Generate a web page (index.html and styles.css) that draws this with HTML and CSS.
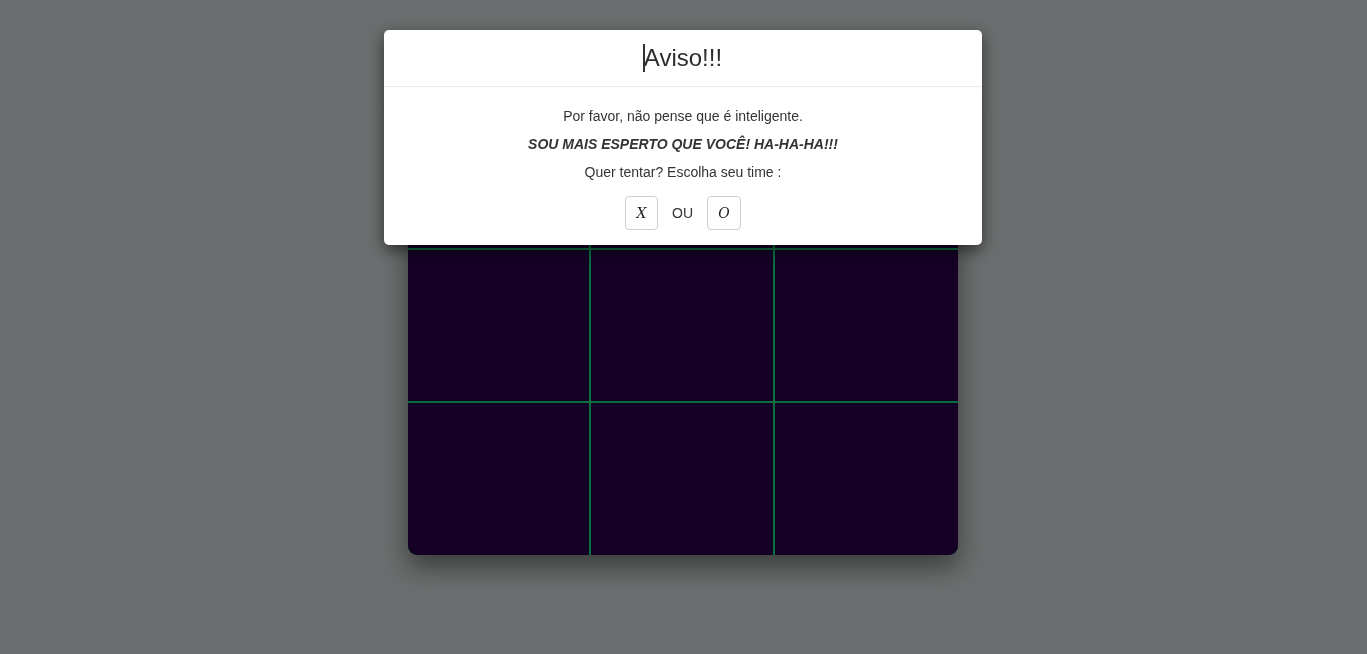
FILE: index.html
```html
<!DOCTYPE html>
<html lang="pt-BR">
<head>
<meta charset="utf-8">
<title>Jogo da Velha</title>
<link rel="stylesheet" href="styles.css">
</head>
<body>
<main class="page">
  <div class="board">
    <div class="cell"></div><div class="cell"></div><div class="cell"></div>
    <div class="cell"></div><div class="cell"></div><div class="cell"></div>
    <div class="cell"></div><div class="cell"></div><div class="cell"></div>
  </div>
</main>
<div class="modal">
  <div class="modal-content">
    <div class="modal-header">
      <h4 class="modal-title"><span class="caret-wrap">Aviso!!!</span></h4>
    </div>
    <div class="modal-body">
      <p>Por favor, não pense que é inteligente.</p>
      <p class="brag">SOU MAIS ESPERTO QUE VOCÊ! HA-HA-HA!!!</p>
      <p>Quer tentar? Escolha seu time :</p>
      <div class="choices">
        <button class="pick">X</button>
        <span class="ou">OU</span>
        <button class="pick pick-o">O</button>
      </div>
    </div>
  </div>
</div>
</body>
</html>
```
FILE: styles.css
```css
* { box-sizing: border-box; }
html, body { margin: 0; height: 100%; }
body {
  background: #6b6e6e;
  font-family: "Liberation Sans", Arial, sans-serif;
  color: #333;
  overflow: hidden;
}
.page {
  display: flex;
  flex-direction: column;
  align-items: center;
  padding-top: 96px;
  padding-right: 1px;
}
.board {
  width: 550px;
  display: grid;
  grid-template-columns: 181px 182px 183px;
  grid-template-rows: 152px 151px 152px;
  gap: 2px;
  background: #087040;
  border-radius: 0 0 9px 9px;
  overflow: hidden;
  box-shadow: 0 12px 26px rgba(0,0,0,0.45);
}
.cell { background: #150026; }

.modal {
  position: fixed;
  left: 0; right: 1px; top: 30px;
  display: flex;
  justify-content: center;
}
.modal-content {
  width: 598px;
  background: #fff;
  border-radius: 5px;
  box-shadow: 0 5px 16px rgba(0,0,0,0.55);
}
.modal-header {
  padding: 14px 16px 14px;
  border-bottom: 1px solid #e9e9e9;
  text-align: center;
}
.modal-title {
  margin: 0;
  font-size: 24px;
  line-height: 28px;
  font-weight: 400;
  color: #2e2e2e;
}
.caret-wrap { position: relative; }
.caret-wrap::before {
  content: "";
  position: absolute;
  left: -1px;
  top: 0;
  width: 2px;
  height: 28px;
  background: #333;
}
.modal-body {
  padding: 19px 16px 15px;
  text-align: center;
  font-size: 14px;
}
.modal-body p {
  margin: 0 0 7px;
  line-height: 21px;
}
.brag { font-weight: 700; font-style: italic; }
.choices {
  margin-top: 13px;
  display: flex;
  justify-content: center;
  align-items: center;
  gap: 14px;
}
.pick {
  width: 33px;
  height: 34px;
  padding: 0;
  background: #fff;
  border: 1px solid #cfcfcf;
  border-radius: 4px;
  font-family: "DejaVu Serif", serif;
  font-style: italic;
  font-size: 14px;
  color: #222;
}
.pick-o { width: 34px; }
.ou { font-size: 14px; }
```
